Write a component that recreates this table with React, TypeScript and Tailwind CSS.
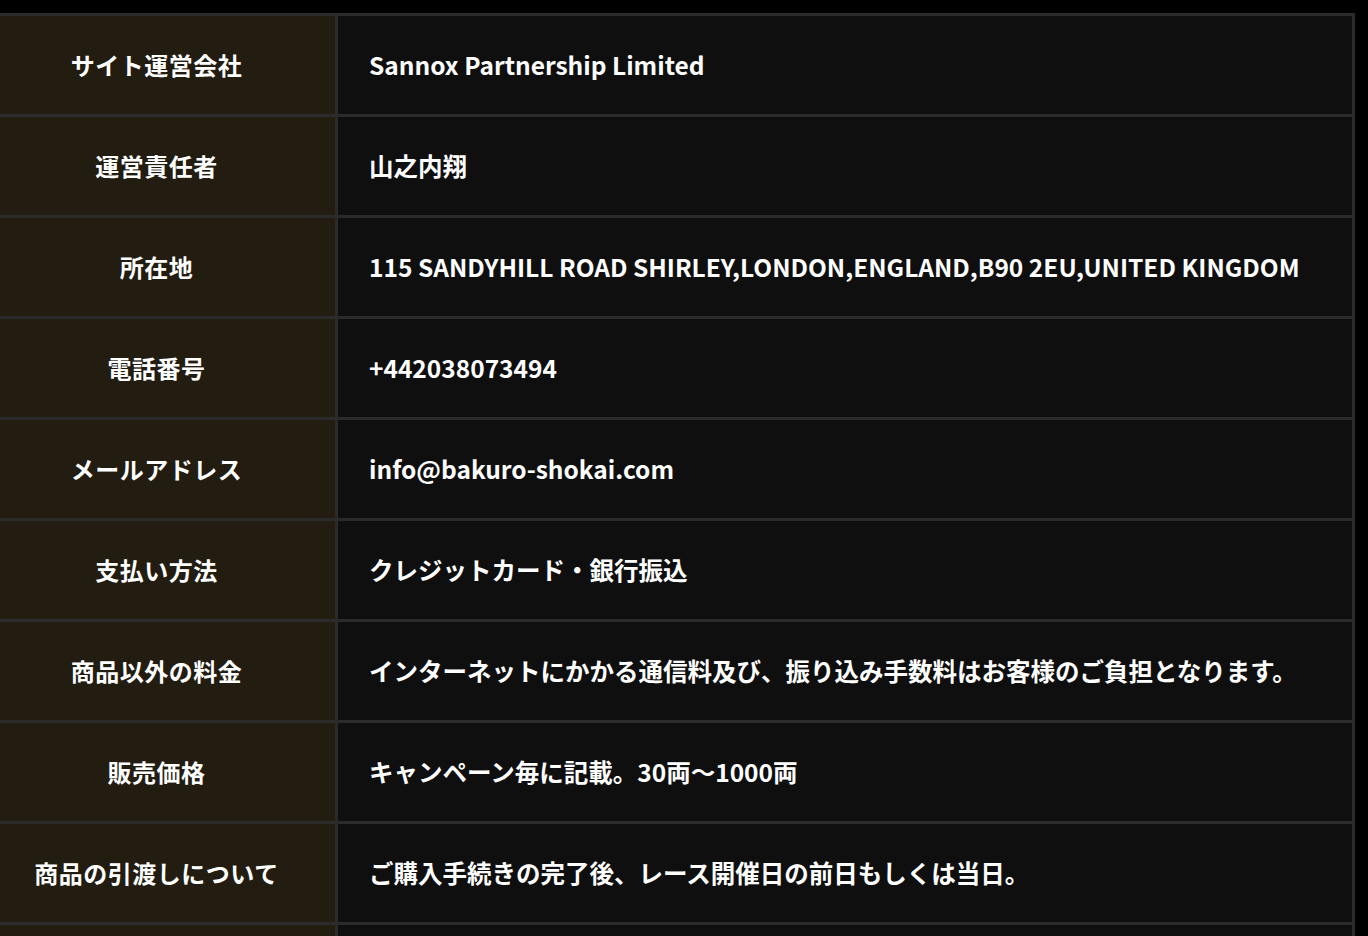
import React from 'react'

interface Row {
	label: string
	value: string
}

const rows: Row[] = [
	{ label: 'サイト運営会社', value: 'Sannox Partnership Limited' },
	{ label: '運営責任者', value: '山之内翔' },
	{ label: '所在地', value: '115 SANDYHILL ROAD SHIRLEY,LONDON,ENGLAND,B90 2EU,UNITED KINGDOM' },
	{ label: '電話番号', value: '+442038073494' },
	{ label: 'メールアドレス', value: 'info@bakuro-shokai.com' },
	{ label: '支払い方法', value: 'クレジットカード・銀行振込' },
	{ label: '商品以外の料金', value: 'インターネットにかかる通信料及び、振り込み手数料はお客様のご負担となります。' },
	{ label: '販売価格', value: 'キャンペーン毎に記載。30両〜1000両' },
	{ label: '商品の引渡しについて', value: 'ご購入手続きの完了後、レース開催日の前日もしくは当日。' },
]

const App: React.FC = () => {
	return (
		<div
			className="w-full h-screen bg-black pt-[13px] overflow-hidden"
			style={{ fontFamily: '"Noto Sans CJK JP", "Noto Sans", sans-serif' }}>
			<div className="ml-[-22px] w-[1377px] bg-[#2b2b2b] grid grid-cols-[357px_1fr] gap-[3px] p-[3px] pl-0">
				{rows.map(row => (
					<React.Fragment key={row.label}>
						<div className="h-[98px] bg-[#221c11] flex items-center justify-center text-white font-bold text-[24px] tracking-[0.5px]">
							{row.label}
						</div>
						<div className="h-[98px] bg-[#0f0f0f] flex items-center pl-[31px] text-white font-semibold text-[24.5px]">
							{row.value}
						</div>
					</React.Fragment>
				))}
				{/* next row continues below the fold */}
				<div className="h-[98px] bg-[#221c11]" />
				<div className="h-[98px] bg-[#0f0f0f]" />
			</div>
		</div>
	)
}

export default App
